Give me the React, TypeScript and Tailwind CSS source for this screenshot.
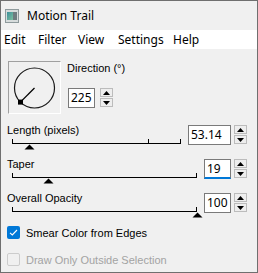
import React from 'react';

const menus = [
  { label: 'Edit', w: 'w-[34px]' },
  { label: 'Filter', w: 'w-[40px]' },
  { label: 'View', w: 'w-[40px]' },
  { label: 'Settings', w: 'w-[55px]' },
  { label: 'Help', w: 'w-[30px]' },
];

const Spinner: React.FC = () => (
  <div className="flex flex-col gap-px w-[13px]">
    <div className="h-[9px] bg-[#eeeeee] border border-[#bcbcbc] flex items-center justify-center">
      <svg width="7" height="4" viewBox="0 0 7 4">
        <path d="M3.5 0L7 4H0z" fill="#000" />
      </svg>
    </div>
    <div className="h-[9px] bg-[#eeeeee] border border-[#bcbcbc] flex items-center justify-center">
      <svg width="7" height="4" viewBox="0 0 7 4">
        <path d="M0 0H7L3.5 4z" fill="#000" />
      </svg>
    </div>
  </div>
);

type RowProps = {
  label: string;
  value: string;
  wide?: boolean;
  focused?: boolean;
  thumb: number;
  ticks: number[];
};

const SliderRow: React.FC<RowProps> = ({ label, value, wide, focused, thumb, ticks }) => (
  <div className="flex items-start h-[34px]">
    <div className="flex-1 pl-[6px]">
      <div className="text-[11px] leading-[13px] text-black">{label}</div>
      <div className="relative mt-[2px] ml-[5px] mr-[7px] h-[5px] border-l border-r border-b border-black">
        {ticks.map((t) => (
          <span key={t} className="absolute bottom-0 w-px h-[4px] bg-black" style={{ left: t }} />
        ))}
        <svg className="absolute top-[5px]" style={{ left: thumb - 6 }} width="11" height="6" viewBox="0 0 11 6">
          <path d="M5.5 0.5L10.5 5.5H0.5z" fill="#000" />
        </svg>
      </div>
    </div>
    <div className="flex items-start gap-[3px] pt-[1px] pr-[10px]">
      <div
        className={`h-[20px] bg-white border border-[#7a7a7a] pl-[2px] text-[12px] leading-[18px] font-['Noto_Sans',sans-serif] ${
          wide ? 'w-[43px]' : 'w-[27px]'
        } ${focused ? 'border-b-2 border-b-[#0078d7]' : ''}`}
      >
        {value}
      </div>
      <Spinner />
    </div>
  </div>
);

export default function App() {
  return (
    <div className="w-[258px] h-[273px] border border-[#6f6f6f] bg-[#f0f0f0] flex flex-col font-['Liberation_Sans',Arial,sans-serif] overflow-hidden">
      {/* title bar */}
      <div className="h-[29px] flex items-center pl-[4px] gap-[8px]">
        <svg width="14" height="14" viewBox="0 0 14 14">
          <defs>
            <linearGradient id="ic" x1="0" y1="0" x2="1" y2="1">
              <stop offset="0" stopColor="#3a8f9a" />
              <stop offset="1" stopColor="#7fc0a0" />
            </linearGradient>
          </defs>
          <rect x="0.5" y="0.5" width="13" height="13" fill="#d7dcdc" stroke="#8e9a9c" />
          <rect x="2" y="3" width="6" height="8" fill="url(#ic)" />
          <rect x="8" y="3" width="4" height="8" fill="#6e7c80" />
        </svg>
        <span className="text-[12px] font-['Noto_Sans',sans-serif] text-black">Motion Trail</span>
      </div>

      {/* menu bar */}
      <div className="h-[19px] bg-white flex items-center pl-[3px] text-[12px] font-['Noto_Sans',sans-serif] text-black">
        {menus.map((m) => (
          <span key={m.label} className={m.w}>
            {m.label}
          </span>
        ))}
      </div>

      {/* direction */}
      <div className="flex items-start pl-[7px] pt-[12px]">
        <div className="w-[53px] h-[53px] border border-t-[#a0a0a0] border-l-[#a0a0a0] border-b-white border-r-white">
          <svg width="51" height="51" viewBox="0 0 51 51">
            <circle cx="25.5" cy="26" r="20" fill="none" stroke="#1a1a1a" strokeWidth="1.2" />
            <line x1="25.5" y1="26" x2="11.4" y2="40.1" stroke="#000" strokeWidth="1.3" />
            <rect x="9" y="37.6" width="5" height="5" fill="#000" />
          </svg>
        </div>
        <div className="ml-[6px] flex flex-col">
          <div className="mt-[1px] text-[11px] leading-[13px] text-black">Direction (°)</div>
          <div className="mt-[13px] ml-[1px] flex items-start gap-[5px]">
            <div className="w-[27px] h-[20px] bg-white border border-[#7a7a7a] pl-[2px] text-[12px] leading-[18px] font-['Noto_Sans',sans-serif]">
              225
            </div>
            <Spinner />
          </div>
        </div>
      </div>

      {/* sliders */}
      <div className="mt-[10px] flex flex-col">
        <SliderRow label="Length (pixels)" value="53.14" wide thumb={17} ticks={[135]} />
        <SliderRow label="Taper" value="19" focused thumb={36} ticks={[]} />
        <SliderRow label="Overall Opacity" value="100" thumb={185} ticks={[]} />
      </div>

      {/* checkboxes */}
      <div className="flex flex-col pl-[6px]">
        <label className="h-[27px] flex items-start gap-[6px] text-[11px] leading-[13px] text-black">
          <span className="w-[13px] h-[13px] rounded-[2px] bg-[#0078d7] flex items-center justify-center">
            <svg width="11" height="11" viewBox="0 0 11 11">
              <path d="M2 5.8L4.3 8L9 3" fill="none" stroke="#fff" strokeWidth="1.1" />
            </svg>
          </span>
          <span className="leading-[14px]">Smear Color from Edges</span>
        </label>
        <label className="h-[14px] flex items-start gap-[6px] text-[11px] leading-[13px] text-[#a3a3a3]">
          <span className="w-[13px] h-[13px] rounded-[2px] border border-[#cccccc]" />
          <span className="leading-[14px]">Draw Only Outside Selection</span>
        </label>
      </div>
    </div>
  );
}
